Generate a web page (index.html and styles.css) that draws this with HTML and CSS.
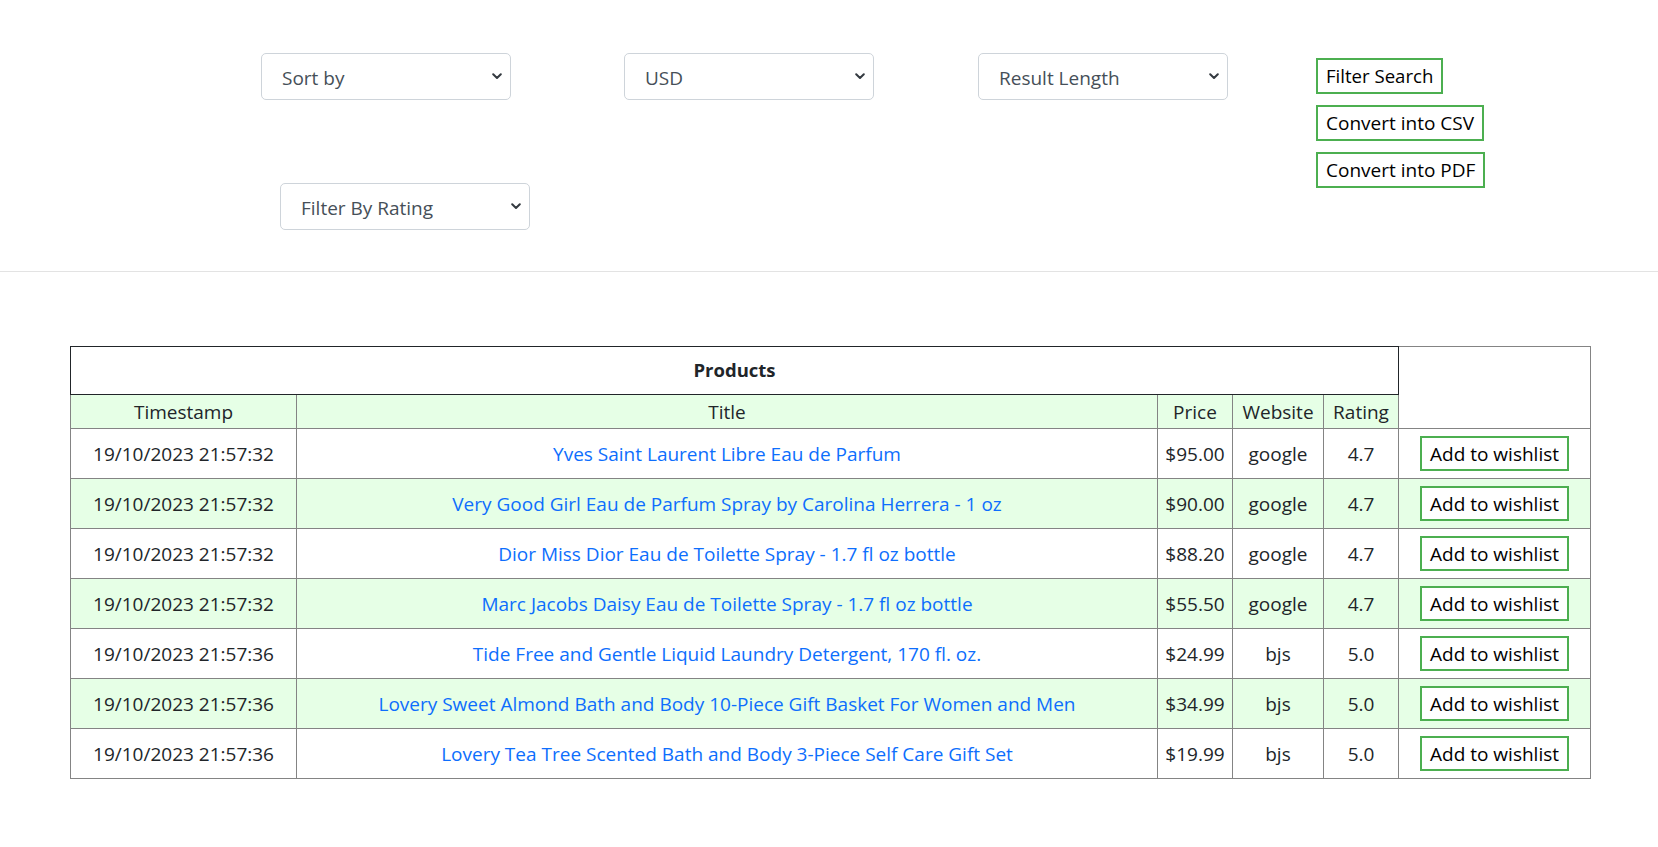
FILE: index.html
```html
<!DOCTYPE html>
<html lang="en">
<head>
<meta charset="utf-8">
<title>Products</title>
<link rel="stylesheet" href="styles.css">
</head>
<body>
<header class="filters">
  <div class="filter-selects">
    <div class="select-row">
      <div class="select-wrap sort">
        <select class="form-select"><option>Sort by</option></select>
        <svg class="chev" viewBox="0 0 10 7" width="10" height="7"><path d="M1.2 1.2 5 5 8.8 1.2" fill="none" stroke="#343a40" stroke-width="2" stroke-linecap="round" stroke-linejoin="round"/></svg>
      </div>
      <div class="select-wrap currency">
        <select class="form-select"><option>USD</option></select>
        <svg class="chev" viewBox="0 0 10 7" width="10" height="7"><path d="M1.2 1.2 5 5 8.8 1.2" fill="none" stroke="#343a40" stroke-width="2" stroke-linecap="round" stroke-linejoin="round"/></svg>
      </div>
      <div class="select-wrap length">
        <select class="form-select"><option>Result Length</option></select>
        <svg class="chev" viewBox="0 0 10 7" width="10" height="7"><path d="M1.2 1.2 5 5 8.8 1.2" fill="none" stroke="#343a40" stroke-width="2" stroke-linecap="round" stroke-linejoin="round"/></svg>
      </div>
    </div>
    <div class="select-row second">
      <div class="select-wrap rating">
        <select class="form-select"><option>Filter By Rating</option></select>
        <svg class="chev" viewBox="0 0 10 7" width="10" height="7"><path d="M1.2 1.2 5 5 8.8 1.2" fill="none" stroke="#343a40" stroke-width="2" stroke-linecap="round" stroke-linejoin="round"/></svg>
      </div>
    </div>
  </div>
  <div class="actions">
    <button class="btn-green" type="button">Filter Search</button>
    <button class="btn-green" type="button">Convert into CSV</button>
    <button class="btn-green" type="button">Convert into PDF</button>
  </div>
</header>
<hr class="divider">
<main class="content">
  <table class="products">
    <colgroup>
      <col class="c-time"><col class="c-title"><col class="c-price"><col class="c-site"><col class="c-rating"><col class="c-action">
    </colgroup>
    <thead>
      <tr class="head-main">
        <th colspan="5" class="caption-cell">Products</th>
        <th rowspan="2" class="blank-cell"></th>
      </tr>
      <tr class="head-cols">
        <th>Timestamp</th><th>Title</th><th>Price</th><th>Website</th><th>Rating</th>
      </tr>
    </thead>
    <tbody>
      <tr><td>19/10/2023 21:57:32</td><td><a href="#">Yves Saint Laurent Libre Eau de Parfum</a></td><td>$95.00</td><td>google</td><td>4.7</td><td><button class="btn-green" type="button">Add to wishlist</button></td></tr>
      <tr class="alt"><td>19/10/2023 21:57:32</td><td><a href="#">Very Good Girl Eau de Parfum Spray by Carolina Herrera - 1 oz</a></td><td>$90.00</td><td>google</td><td>4.7</td><td><button class="btn-green" type="button">Add to wishlist</button></td></tr>
      <tr><td>19/10/2023 21:57:32</td><td><a href="#">Dior Miss Dior Eau de Toilette Spray - 1.7 fl oz bottle</a></td><td>$88.20</td><td>google</td><td>4.7</td><td><button class="btn-green" type="button">Add to wishlist</button></td></tr>
      <tr class="alt"><td>19/10/2023 21:57:32</td><td><a href="#">Marc Jacobs Daisy Eau de Toilette Spray - 1.7 fl oz bottle</a></td><td>$55.50</td><td>google</td><td>4.7</td><td><button class="btn-green" type="button">Add to wishlist</button></td></tr>
      <tr><td>19/10/2023 21:57:36</td><td><a href="#">Tide Free and Gentle Liquid Laundry Detergent, 170 fl. oz.</a></td><td>$24.99</td><td>bjs</td><td>5.0</td><td><button class="btn-green" type="button">Add to wishlist</button></td></tr>
      <tr class="alt"><td>19/10/2023 21:57:36</td><td><a href="#">Lovery Sweet Almond Bath and Body 10-Piece Gift Basket For Women and Men</a></td><td>$34.99</td><td>bjs</td><td>5.0</td><td><button class="btn-green" type="button">Add to wishlist</button></td></tr>
      <tr><td>19/10/2023 21:57:36</td><td><a href="#">Lovery Tea Tree Scented Bath and Body 3-Piece Self Care Gift Set</a></td><td>$19.99</td><td>bjs</td><td>5.0</td><td><button class="btn-green" type="button">Add to wishlist</button></td></tr>
    </tbody>
  </table>
</main>
</body>
</html>
```

FILE: styles.css
```css
* { box-sizing: border-box; }

body {
  margin: 0;
  background: #ffffff;
  color: #212529;
  font-family: "Open Sans", "Noto Sans", sans-serif;
  font-size: 19px;
}

.filters {
  display: flex;
  align-items: flex-start;
  padding-top: 53px;
}

.select-row {
  display: flex;
}

.select-row.second {
  margin-top: 83px;
}

.select-wrap {
  position: relative;
  width: 250px;
  height: 47px;
}

.select-wrap.sort { margin-left: 261px; }
.select-wrap.currency { margin-left: 113px; }
.select-wrap.length { margin-left: 104px; }
.select-wrap.rating { margin-left: 280px; }

.form-select {
  appearance: none;
  -webkit-appearance: none;
  width: 100%;
  height: 100%;
  margin: 0;
  padding: 2px 36px 0 20px;
  border: 1px solid #ced4da;
  border-radius: 5px;
  background: #ffffff;
  color: #464f58;
  font-family: inherit;
  font-size: 19px;
}

.chev {
  position: absolute;
  right: 9px;
  top: 20px;
  pointer-events: none;
}

.actions {
  display: flex;
  flex-direction: column;
  align-items: flex-start;
  gap: 11px;
  margin-left: 88px;
  margin-top: 5px;
}

.btn-green {
  height: 36px;
  padding: 0 8px;
  border: 2px solid #4caf50;
  border-radius: 0;
  background: #ffffff;
  color: #000000;
  font-family: inherit;
  font-size: 19px;
  line-height: 32px;
  white-space: nowrap;
  cursor: pointer;
}

.actions .btn-green:first-child {
  font-size: 18.6px;
}

.divider {
  margin: 41px 0 0;
  height: 0;
  border: 0;
  border-top: 1px solid #e3e3e3;
}

.content {
  padding: 74px 68px 0 70px;
}

.products {
  width: 1520px;
  border-collapse: collapse;
  table-layout: fixed;
}

.c-time { width: 226px; }
.c-title { width: 861px; }
.c-price { width: 75px; }
.c-site { width: 91px; }
.c-rating { width: 75px; }
.c-action { width: 192px; }

.products th,
.products td {
  border: 1px solid #848484;
  padding: 0;
  text-align: center;
  vertical-align: middle;
  white-space: nowrap;
}

.products th {
  font-weight: 400;
}

.head-main th { height: 48px; }

.products .caption-cell {
  border: 1px solid #212529;
  font-weight: 700;
  font-size: 18.5px;
  padding-bottom: 2px;
}

.head-cols th {
  height: 34px;
  background: #e6ffe6;
}

.products td { height: 50px; }

.products tr.alt td { background: #e6ffe6; }

.products a {
  color: #0d6efd;
  text-decoration: none;
}

.products .btn-green {
  height: 35px;
  padding: 2px 8px 0;
  line-height: 29px;
}
```
